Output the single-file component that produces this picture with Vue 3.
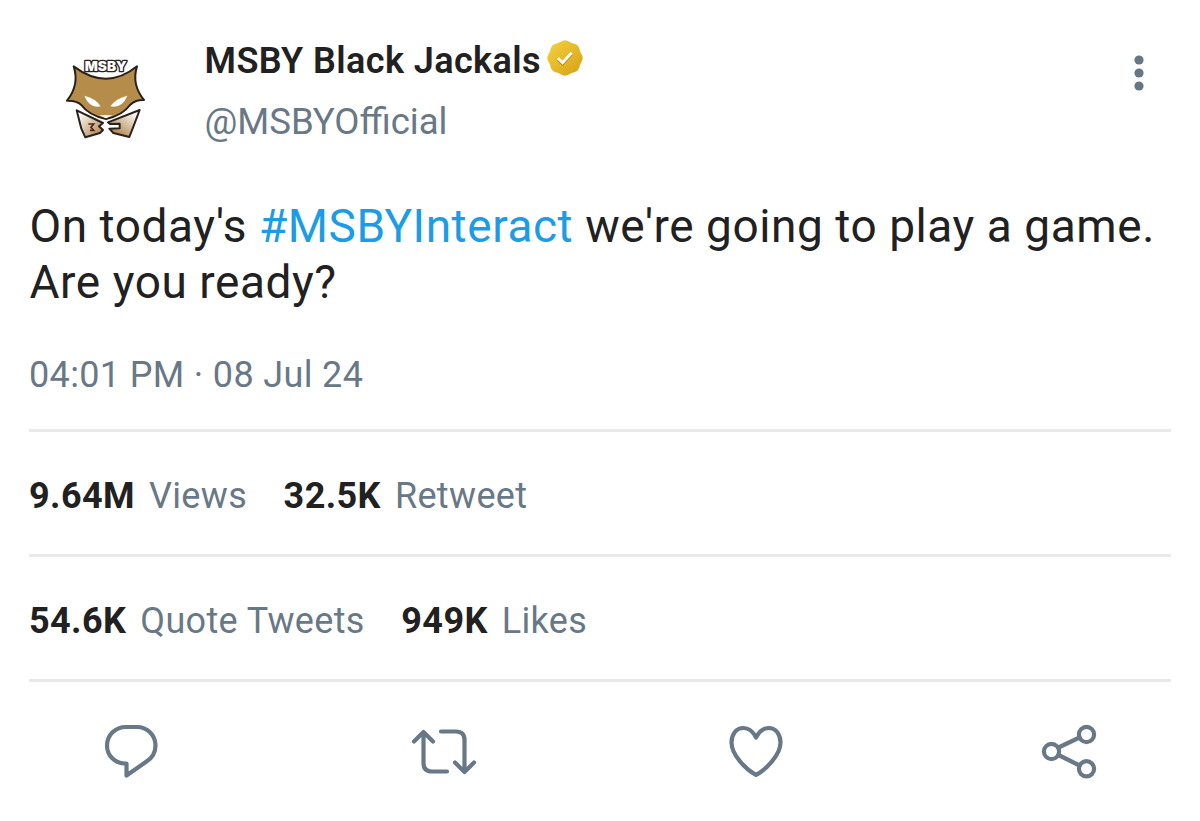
<template>
  <article class="tweet">
    <header class="tweet-header">
      <!-- Team logo -->
      <svg class="avatar" viewBox="0 0 330 315" role="img" aria-label="MSBY Black Jackals">
        <defs>
          <linearGradient id="collarLeft" x1="0" y1="0" x2="1" y2="1">
            <stop offset="0.1" stop-color="#ffffff" />
            <stop offset="1" stop-color="#a97b3c" />
          </linearGradient>
          <linearGradient id="collarRight" x1="1" y1="0" x2="0.2" y2="1">
            <stop offset="0.1" stop-color="#ffffff" />
            <stop offset="1" stop-color="#a97b3c" />
          </linearGradient>
        </defs>
        <g stroke="#2a211c" stroke-width="6" stroke-linejoin="round">
          <path
            d="M71 64 Q120 101 168 101 Q216 101 261 64 Q244 118 282 165 Q255 164 240 180 Q218 211 168 222 Q116 211 94 180 Q80 166 51 167 Q89 119 71 64Z"
            fill="#b68c4b"
          />
          <path d="M80 196 L159 234 L147 244 L159 255 L150 264 L106 277 L94 251Z" fill="url(#collarLeft)" />
          <path d="M269 195 L174 232 L180 237 L209 236 V250 L178 251 L190 264 L238 276 L249 248Z" fill="url(#collarRight)" />
        </g>
        <path d="M148 211 L188 211 L168 220Z" fill="#fff" />
        <path d="M103 152 Q137 160 152 184 Q119 191 103 152Z" fill="#fff" />
        <path d="M232 152 Q198 160 181 184 Q216 191 232 152Z" fill="#fff" />
        <path d="M115 237 H131 L123 247 L131 256 H120" fill="none" stroke="#56251a" stroke-width="5" />
        <text class="avatar-text" x="104" y="79" textLength="126" lengthAdjust="spacingAndGlyphs">MSBY</text>
      </svg>

      <div class="author">
        <div class="name-row">
          <span class="name">MSBY Black Jackals</span>
          <svg class="badge" viewBox="0 0 36 36">
            <defs>
              <linearGradient id="gold" x1="0" y1="0" x2="1" y2="1">
                <stop offset="0" stop-color="#f5d33f" />
                <stop offset="0.5" stop-color="#e5b92b" />
                <stop offset="1" stop-color="#d6a010" />
              </linearGradient>
            </defs>
            <path :d="badgePath" fill="url(#gold)" />
            <path d="M11 18.7 L15.6 23.2 L24.6 13.2" fill="none" stroke="#b88710" stroke-width="2.6" transform="translate(0 1)" />
            <path d="M11 18.2 L15.6 22.7 L24.6 12.7" fill="none" stroke="#fff" stroke-width="2.8" />
          </svg>
        </div>
        <div class="handle">@MSBYOfficial</div>
      </div>

      <svg class="more" viewBox="0 0 10 36">
        <circle v-for="cy in [5, 18, 31]" :key="cy" cx="5" :cy="cy" r="4.6" />
      </svg>
    </header>

    <p class="body">On today's <span class="hashtag">#MSBYInteract</span> we're going to play a game.<br />Are you ready?</p>
    <div class="date">04:01 PM · 08 Jul 24</div>

    <div v-for="(row, i) in stats" :key="i" class="stats">
      <div v-for="stat in row" :key="stat.label" class="stat">
        <span class="value">{{ stat.value }}</span>
        <span class="label">{{ stat.label }}</span>
      </div>
    </div>

    <footer class="actions">
      <svg class="icon" viewBox="0 0 90 80">
        <path d="M36 16 H47 C57 16 65.500 24 65.500 34.500 C65.500 41 62 47 56.500 50.500 L36.500 64.500 V52.500 H34.500 C24.500 52 17 44.500 17 34.500 C17 24 25.500 16 36 16Z" />
      </svg>
      <svg class="icon" viewBox="0 0 90 80">
        <path d="M14 30.500 L23.500 21 L33 30.500 M23.500 22 V52 Q23.500 60.500 32 60.500 H47" />
        <path d="M41 20.500 H56 Q64.500 20.500 64.500 29 V60 M55 51.500 L64.500 61 L74 51.500" />
      </svg>
      <svg class="icon" viewBox="0 0 90 80">
        <path d="M41 26.500 C37.500 19.500 33 17 28.500 17 C21 17 16.500 23.500 16.500 31.500 C16.500 44 31 58.500 41 64 C51 58.500 65.500 44 65.500 31.500 C65.500 23.500 61 17 53.500 17 C49 17 44.500 19.500 41 26.500Z" />
      </svg>
      <svg class="icon" viewBox="0 0 90 80">
        <circle cx="26.500" cy="40.500" r="7.600" />
        <circle cx="61.500" cy="23.500" r="7.600" />
        <circle cx="61.500" cy="57.800" r="7.600" />
        <path d="M33.500 36.500 L54.500 26.500 M33.500 44 L54.500 54.500" />
      </svg>
    </footer>
  </article>
</template>

<script setup>
const stats = [
  [
    { value: '9.64M', label: 'Views' },
    { value: '32.5K', label: 'Retweet' }
  ],
  [
    { value: '54.6K', label: 'Quote Tweets' },
    { value: '949K', label: 'Likes' }
  ]
]

// Scalloped outline of the verified badge
const points = Array.from({ length: 96 }, (_, i) => {
  const angle = (i / 96) * Math.PI * 2
  const r = 17.1 + 0.6 * Math.cos(angle * 8)
  return `${(18 + r * Math.cos(angle)).toFixed(2)} ${(18 + r * Math.sin(angle)).toFixed(2)}`
})
const badgePath = `M${points.join('L')}Z`
</script>

<style>
body {
  margin: 0;
  background: #fff;
}
</style>

<style scoped>
.tweet {
  box-sizing: border-box;
  width: 1200px;
  height: 821px;
  padding: 0 29px;
  overflow: hidden;
  background: #fff;
  color: #212121;
  font-family: Roboto, 'Liberation Sans', sans-serif;
}

.tweet-header {
  display: flex;
  align-items: flex-start;
  height: 198px;
}

.avatar {
  width: 110px;
  height: 105px;
  margin: 45px 44.5px 0 21px;
}

.avatar-text {
  font-family: Inter, 'Liberation Sans', sans-serif;
  font-size: 40px;
  font-weight: 900;
  fill: #fff;
  stroke: #2a211c;
  stroke-width: 8px;
  stroke-linejoin: round;
  paint-order: stroke;
}

.author {
  flex: 1;
  padding-top: 40px;
}

.name-row {
  display: flex;
  align-items: flex-start;
  gap: 6px;
  height: 61px;
}

.name {
  font-size: 36px;
  font-weight: 600;
  line-height: 42px;
  letter-spacing: 0.41px;
}

.badge {
  width: 36px;
  height: 36px;
}

.handle {
  color: #687886;
  font-size: 36.6px;
  line-height: 42px;
}

.more {
  width: 10px;
  height: 36px;
  margin: 55px 27px 0 0;
  fill: #647786;
}

.body {
  height: 156px;
  margin: 0;
  padding-left: 0.5px;
  font-size: 46px;
  line-height: 56px;
  letter-spacing: 0.55px;
  white-space: nowrap;
}

.hashtag {
  color: #1c9ce6;
}

.date {
  height: 75px;
  color: #687886;
  font-size: 36px;
  line-height: 42px;
  letter-spacing: 0.35px;
}

.stats {
  display: flex;
  box-sizing: border-box;
  height: 125px;
  gap: 36.5px;
  padding-top: 43px;
  border-top: 3px solid #e9e9e9;
  font-size: 36px;
  line-height: 42px;
}

.stat {
  display: flex;
  gap: 14px;
}

.value {
  font-weight: 700;
  letter-spacing: 0.4px;
}

.label {
  color: #687886;
  letter-spacing: 0.35px;
}

.actions {
  display: flex;
  justify-content: space-between;
  padding: 28.5px 56px 0 61px;
  border-top: 3px solid #e9e9e9;
}

.icon {
  width: 90px;
  height: 80px;
  fill: none;
  stroke: #687886;
  stroke-width: 4.2px;
  stroke-linecap: round;
  stroke-linejoin: round;
}

/* optical centring of the two middle icons */
.icon:nth-child(2) {
  margin-left: -4px;
}

.icon:nth-child(3) {
  margin-right: -4px;
}
</style>
